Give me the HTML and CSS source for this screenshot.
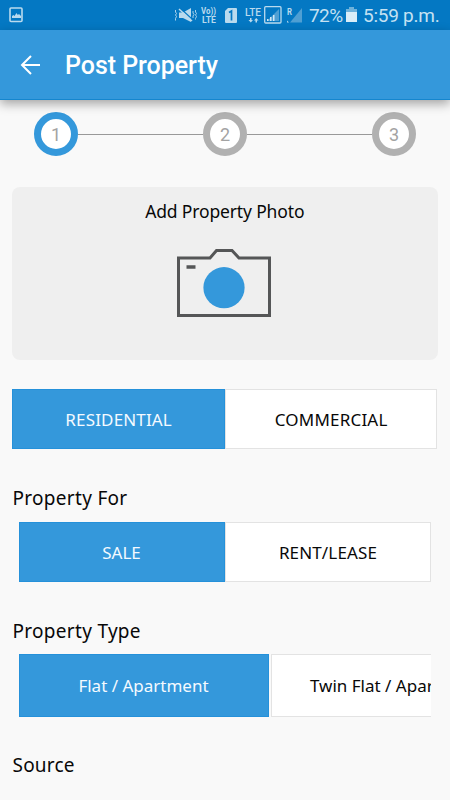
FILE: index.html
```html
<!DOCTYPE html>
<html lang="en">
<head>
<meta charset="utf-8">
<title>Post Property</title>
<link rel="stylesheet" href="styles.css">
</head>
<body>
<div class="status">
  <svg class="picture" width="15" height="16" viewBox="0 0 15 16"><rect x="1" y="1" width="12" height="13.5" rx="1" fill="none" stroke="#b9daee" stroke-width="1.6"/><path d="M3 11V9l1.500-1 1 1 2-3 1.300 2 1.200-1L12 9v2z" fill="#b9daee"/></svg>
  <svg class="vibrate" width="23" height="16" viewBox="0 0 23 16" fill="none" stroke="#b9daee"><path d="M1.500 3v2l1 1.500-1 1.500 1 1.500-1 2v2M19 4v2l1 1.500-1 1.500v2M21.500 3v2l1 1.500-1 1.500 1 1.500-1 2v1" stroke-width=".9"/><path d="M5 5.500h4L17 1v14L9 11H5z" fill="#b9daee" stroke="none"/><path d="M6 1l13 12" stroke="#0478c3" stroke-width="1.300"/><path d="M5 2l13 12" stroke-width="1.500"/></svg>
  <svg class="volte" width="17" height="18" viewBox="0 0 17 18"><text x="0" y="8" textLength="15" lengthAdjust="spacingAndGlyphs">Vo))</text><text x="1" y="17" textLength="14" lengthAdjust="spacingAndGlyphs">LTE</text></svg>
  <svg class="sim" width="13" height="15" viewBox="0 0 13 15"><path d="M3 0h8q1 0 1 1v13q0 1-1 1H1q-1 0-1-1V3z" fill="#b9daee"/><path d="M4 4.500L6.500 3v9.500" fill="none" stroke="#0478c3" stroke-width="1.700"/></svg>
  <svg class="lte" width="17" height="17" viewBox="0 0 17 17"><text class="big" x="0" y="8.500" textLength="16" lengthAdjust="spacingAndGlyphs">LTE</text><path d="M5 11h1.500v2H8l-2.200 2.500L3.500 13H5zM9 13.500l2.200-2.500 2.300 2.500H12v2h-1.500v-2z" fill="#b9daee"/></svg>
  <svg class="signal-box" width="18" height="18" viewBox="0 0 18 18"><rect x=".7" y=".7" width="16.300" height="16.300" rx="1" fill="none" stroke="#b9daee" stroke-width="1.300"/><path d="M3 15L15 3v12z" fill="#4f9fd3"/><path d="M3 15v-2h1.500v2zM6 15v-4h1.500v4zM9 15V9h1.500v6z" fill="#cfe7f5"/></svg>
  <svg class="roaming" width="16" height="16" viewBox="0 0 16 16"><path d="M3 15.500L15 1v14.500z" fill="#4f9fd3"/><path d="M0 15.500v-2l2 2z" fill="#b9daee"/><text x="0" y="7.500" textLength="5" lengthAdjust="spacingAndGlyphs">R</text></svg>
  <span class="percent">72%</span>
  <svg class="battery" width="11" height="16" viewBox="0 0 11 16"><path d="M3 0h5v2h3v3H0V2h3z" fill="#6eb2db"/><path d="M0 5h11v10H0z" fill="#d9edf8"/></svg>
  <span class="time">5:59 p.m.</span>
</div>
<header class="appbar">
  <svg width="22" height="22" viewBox="0 0 22 22" fill="none" stroke="#fff" stroke-width="2"><path d="M21 11H2.500M12 2L3 11l9 9"/></svg>
  <h1>Post Property</h1>
</header>
<main>
  <div class="steps">
    <span class="step on">1</span><i></i><span class="step">2</span><i></i><span class="step">3</span>
  </div>
  <section class="photo">
    <p class="add">Add Property Photo</p>
    <svg width="94" height="70" viewBox="0 0 94 70"><path d="M1.500 10H33L39.500 2.500H55L62 10H92.500V67.500H1.500z" fill="none" stroke="#555657" stroke-width="3"/><path d="M9.500 19h9" stroke="#555657" stroke-width="3.500"/><circle cx="47" cy="39.700" r="20.600" fill="#3498db"/></svg>
  </section>
  <div class="pair category"><span class="option on"><b class="residential">RESIDENTIAL</b></span><span class="option"><b class="commercial">COMMERCIAL</b></span></div>
  <h2 class="for">Property For</h2>
  <div class="pair deal"><span class="option on"><b class="sale">SALE</b></span><span class="option"><b class="rent">RENT/LEASE</b></span></div>
  <h2 class="type">Property Type</h2>
  <div class="types"><span class="option on"><b class="flat">Flat / Apartment</b></span><span class="option"><b>Twin Flat / Apartment</b></span></div>
  <h2 class="source">Source</h2>
</main>
</body>
</html>
```
FILE: styles.css
```css
* { box-sizing: border-box; }
body { margin: 0; width: 450px; height: 800px; overflow: hidden; background: #f9f9f9; color: #080808; font-family: "Noto Sans", sans-serif; }
h1, h2, p { margin: 0; font-weight: 400; }
b { font-weight: 400; white-space: nowrap; }
svg { display: block; flex: none; }
.status { height: 30px; background: #0478c3; display: flex; align-items: center; padding-left: 9px; color: #c5e1f2; font: 400 19px/30px Roboto, sans-serif; white-space: nowrap; }
.status text { font: 700 8.5px Roboto, sans-serif; fill: #b9daee; }
.status text.big { font-weight: 500; font-size: 10.5px; }
.vibrate { margin-left: 150px; }
.volte { margin-left: 4px; }
.sim { margin-left: 7px; }
.lte { margin-left: 7px; }
.signal-box { margin-left: 2px; }
.roaming { margin-left: 5px; }
.percent { margin-left: 6px; width: 37px; letter-spacing: -.6px; padding-top: 2px; }
.battery { margin-right: 6px; }
.time { letter-spacing: -.25px; padding-top: 2px; }
.appbar { position: relative; height: 70px; background: #3498db; border-bottom: 1px solid #1586ce; display: flex; align-items: center; gap: 24px; padding-left: 19px; color: #fff; box-shadow: 0 4px 10px rgba(0,0,0,.34); }
.appbar h1 { font: 500 25px/30px Roboto, sans-serif; letter-spacing: -.05px; padding-top: 3px; }
main { padding: 12px 12px 0; }
.steps { display: flex; align-items: center; padding: 0 22px; height: 44px; }
.steps i { flex: 1; height: 1px; background: #999; }
.step { width: 44px; height: 44px; border: 7px solid #b1b1b1; border-radius: 50%; background: #fff; color: #a3a3a3; text-align: center; font: 400 18px/31px Roboto, sans-serif; }
.step.on { border-color: #3498db; }
.photo { margin-top: 31px; height: 173px; border-radius: 8px; background: #efefef; display: flex; flex-direction: column; align-items: center; width: 425.500px; }
.add { font-size: 17.500px; line-height: 24px; margin-top: 12px; letter-spacing: -.15px; }
.photo svg { margin-top: 25px; margin-right: 1px; }
.pair { display: grid; grid-template-columns: 212.500px 1fr; height: 60px; }
.category { margin-top: 29px; margin-left: .4px; width: 425px; }
.deal { margin: 11px 7px 0; grid-template-columns: 206px 1fr; }
.option { display: flex; align-items: center; justify-content: center; background: #fff; border: 1px solid #e3e3e3; font-size: 17px; color: #080808; }
.option.on { background: #3498db; border-color: #2591da; color: #f5faff; }
.residential, .rent { letter-spacing: .15px; }
.commercial { letter-spacing: .2px; }
.sale, .flat { margin-right: 1px; }
h2 { font-size: 19px; line-height: 26px; letter-spacing: .3px; padding-left: .5px; }
.for { margin-top: 36px; }
.type { margin-top: 36px; }
.types { display: flex; gap: 2px; height: 63px; margin: 10px 7px 0; overflow: hidden; }
.types .option { flex: 0 0 250px; }
.source { margin-top: 35px; letter-spacing: .2px; }
```
